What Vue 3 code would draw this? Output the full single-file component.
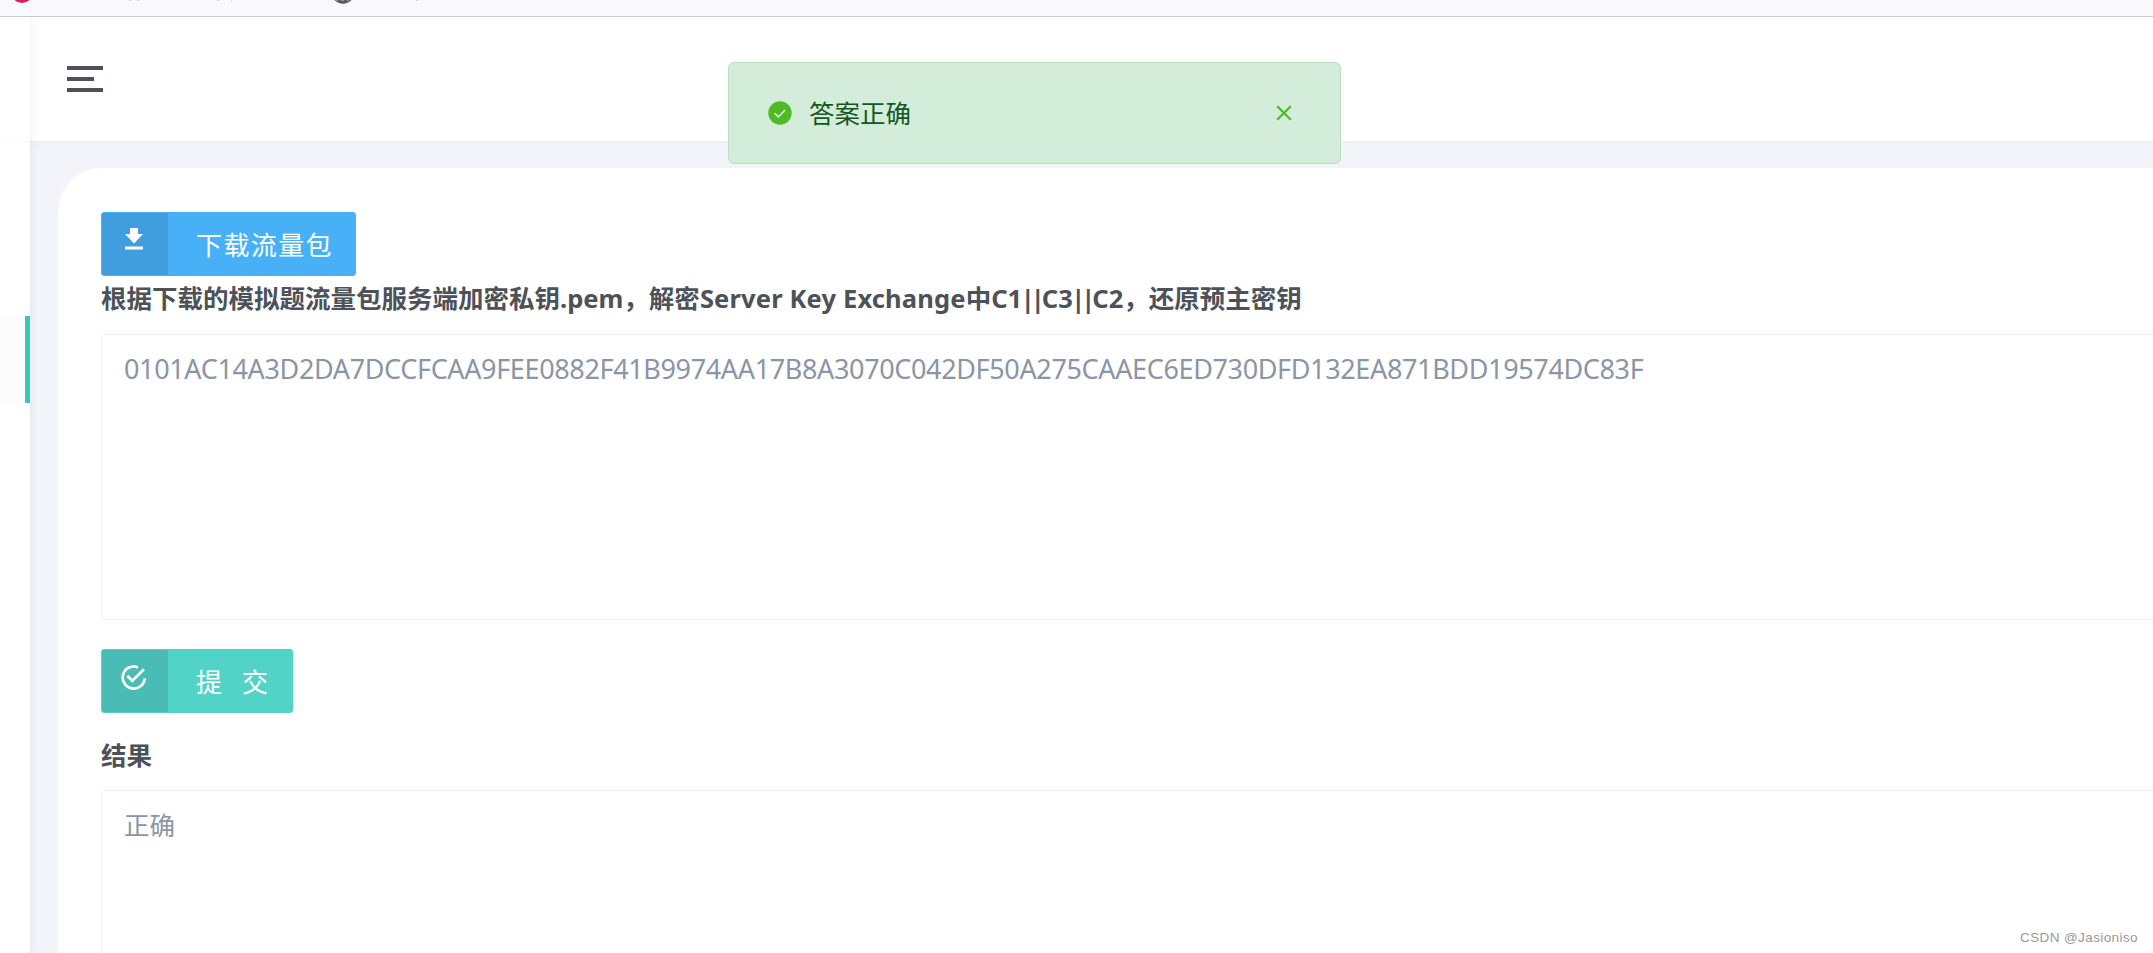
<script setup>
const question = {
  start: '根据下载的模拟题流量包服务端加密私钥.pem，解密',
  message: 'Server Key Exchange',
  among: '中',
  order: ['C1', 'C3', 'C2'],
  end: '，还原预主密钥'
}
const answer = '0101AC14A3D2DA7DCCFCAA9FEE0882F41B9974AA17B8A3070C042DF50A275CAAEC6ED730DFD132EA871BDD19574DC83F'
</script>

<template>
  <div class="screen">
    <div class="browser-bar">
      <svg width="460" height="16" viewBox="0 0 460 16">
        <circle cx="22" cy="-8" r="11" fill="#dc1c5c" />
        <circle cx="343" cy="-8" r="11.7" fill="#5b5b63" />
        <path d="M336 0h2M341 0h3M347 0h2" stroke="#aaa" stroke-width="1.5" />
        <path d="M129 .3h2M137 .3h2M217 .3h2M231 .3h1M416 .3h2" stroke="#c8c8cd" stroke-width="1" />
      </svg>
    </div>
    <div class="body">
      <aside class="sidebar">
        <div class="brand"></div>
        <div class="active-item"></div>
      </aside>
      <div class="main">
        <header class="header">
          <div class="burger"><i></i><i class="short"></i><i></i></div>
        </header>
        <main class="card">
          <button class="btn blue">
            <span class="btn-icon">
              <svg width="20" height="24" viewBox="0 0 20 24" fill="#fff">
                <path d="M6 0h8v6h5l-9 9.500L1 6h5zM1 18.500h18v3H1z" />
              </svg>
            </span>
            <span class="btn-label">下载流量包</span>
          </button>
          <h4 class="question">{{ question.start }}<span class="message">{{ question.message }}</span>{{ question.among }}<template v-for="(part, i) in question.order" :key="part"><span v-if="i" class="pipes">||</span>{{ part }}</template>{{ question.end }}</h4>
          <div class="field"><span class="hex">{{ answer }}</span></div>
          <button class="btn teal">
            <span class="btn-icon">
              <svg class="check" width="26" height="26" viewBox="0 0 26 26" fill="none" stroke="#fff" stroke-width="2.700">
                <path d="M17 2.400A11 11 0 1 0 23.700 13.300M6.300 10.800l5 5L23 4.300" />
              </svg>
            </span>
            <span class="btn-label wide">提<b></b>交</span>
          </button>
          <h4 class="result">结果</h4>
          <div class="field">正确</div>
        </main>
      </div>
    </div>
    <div class="alert">
      <svg width="24" height="24" viewBox="0 0 24 24">
        <circle cx="12" cy="12" r="11.700" fill="#4fba23" />
        <path d="M6.700 12.200l3.700 3.700 6.600-7" fill="none" stroke="#e9f8e5" stroke-width="1.500" />
      </svg>
      <span class="alert-text">答案正确</span>
      <svg class="close" width="16" height="16" viewBox="0 0 16 16">
        <path d="M1.200 1.200l13.600 13.600M14.800 1.200L1.200 14.800" stroke="#4fba23" stroke-width="2.200" />
      </svg>
    </div>
    <div class="watermark">CSDN @Jasioniso</div>
  </div>
</template>

<style>
html, body { overflow: hidden; }
</style>

<style scoped>
* { box-sizing: border-box; }
.screen {
  position: relative;
  width: 2153px;
  height: 953px;
  overflow: hidden;
  display: flex;
  flex-direction: column;
  background: #f3f4fa;
  font-family: "Noto Sans", "Noto Sans CJK SC", sans-serif;
  font-size: 25.500px;
  color: #4d5259;
}
.browser-bar { height: 17px; flex: none; background: #f9f9fc; border-bottom: 1px solid #ccc; }
.browser-bar svg { display: block; }
.body { flex: 1; display: flex; min-height: 0; overflow: hidden; }
.sidebar { width: 30px; flex: none; background: #fff; box-shadow: 0 0 12px rgba(0, 0, 0, .08); z-index: 1; }
.brand { height: 125px; border-bottom: 1px solid #f7f7f7; }
.active-item { margin-top: 174px; height: 87px; background: #fbfbfb; border-right: 5px solid #3ac7b8; }
.main { flex: 1; min-width: 0; display: flex; flex-direction: column; }
.header { height: 124px; flex: none; padding: 49px 37px; background: #fff; box-shadow: 0 0 10px rgba(0, 0, 0, .035); }
.burger { display: flex; flex-direction: column; gap: 7px; }
.burger i { width: 36px; height: 4px; background: #4d5259; }
.burger .short { width: 27px; }
.card {
  flex: 1;
  margin: 27px 0 0 28px;
  padding: 44px 0 0 43px;
  min-height: 0;
  overflow: hidden;
  background: #fff;
  border-radius: 44px 0 0 0;
  display: flex;
  flex-direction: column;
  align-items: flex-start;
}
.btn {
  height: 64px;
  flex: none;
  display: flex;
  padding: 0;
  border: 1px solid;
  border-radius: 3px;
  overflow: hidden;
  font: inherit;
  color: #fff;
}
.blue { width: 255px; background: #48b0f7; border-color: #48b0f7; }
.teal { width: 192px; background: #52d3c7; border-color: #52d3c7; margin-top: 29px; }
.btn-icon { width: 66px; height: 62px; padding: 15px 0 0 22px; text-align: left; background: rgba(30, 60, 80, .15); }
.btn-icon svg { display: block; }
.btn-icon .check { margin-left: -3px; }
.btn-label { padding-left: 28px; line-height: 65px; font-size: 26px; letter-spacing: 1.400px; white-space: nowrap; }
.wide { display: flex; padding-left: 28px; letter-spacing: 0; }
.wide b { width: 20px; }
h4 { flex: none; margin: 0; font-size: 25.500px; font-weight: 700; line-height: 44px; white-space: nowrap; }
.question { height: 58px; }
.message { letter-spacing: .16px; }
.pipes { margin-left: -1.500px; margin-right: 1px; letter-spacing: -4px; }
.field {
  width: 2100px;
  height: 286px;
  flex: none;
  padding: 15px 22px;
  line-height: 38px;
  color: #8b95a5;
  border: 1px solid #efefef;
  border-radius: 4px;
  white-space: nowrap;
}
.hex { font-size: 27px; letter-spacing: -.36px; }
.result { margin-top: 20px; height: 57px; }
.alert {
  position: absolute;
  left: 728px;
  top: 62px;
  width: 613px;
  height: 102px;
  padding: 0 48px 0 39px;
  display: flex;
  align-items: center;
  background: #d4edda;
  border: 1px solid #b9e1c0;
  border-radius: 6px;
  color: #155724;
}
.alert-text { margin-left: 17px; line-height: 36px; }
.close { margin-left: auto; }
.watermark {
  position: absolute;
  right: 15px;
  bottom: 6px;
  font: 13.500px/18px "Liberation Sans", sans-serif;
  letter-spacing: .4px;
  color: #999;
}
</style>
